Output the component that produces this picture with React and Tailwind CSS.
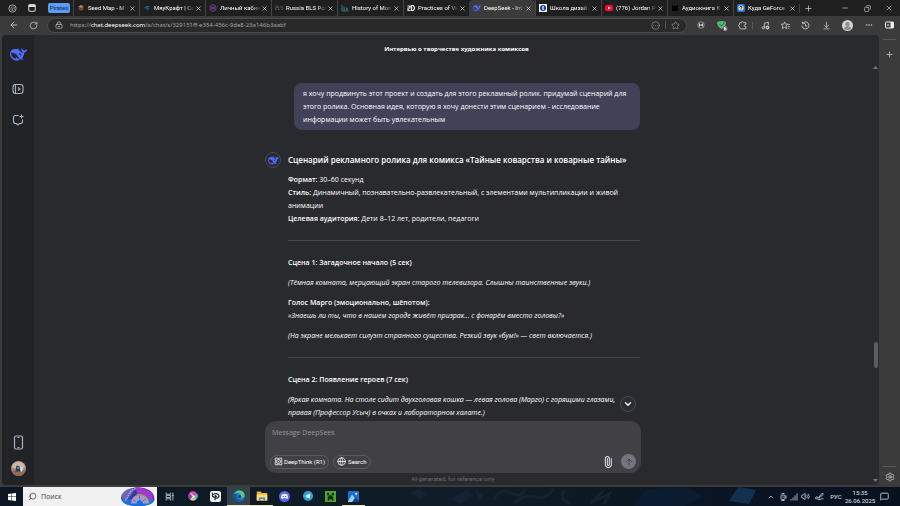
import {
  ArrowDownToLine, ArrowLeft, ArrowUp, ChevronDown, ChevronUp, CircleEllipsis, Copy, Ellipsis, Globe,
  LockKeyhole, MessageSquare, Minus, Paperclip, Plus, RotateCw, Search, Settings, Star, Volume2, X,
} from "lucide-react";

const WHALE =
  "M23.748 4.482c-.254-.124-.364.113-.512.234-.051.039-.094.09-.137.136-.372.397-.806.657-1.373.626-.829-.046-1.537.214-2.163.848-.133-.782-.575-1.248-1.247-1.548-.352-.156-.708-.311-.955-.65-.172-.241-.219-.51-.305-.774-.055-.16-.11-.323-.293-.35-.2-.031-.278.136-.356.276-.313.572-.434 1.202-.422 1.84.027 1.436.633 2.58 1.838 3.393.137.093.172.187.129.323-.082.28-.18.552-.266.833-.055.179-.137.217-.329.14a5.526 5.526 0 01-1.736-1.18c-.857-.828-1.631-1.742-2.597-2.458a11.365 11.365 0 00-.689-.471c-.985-.957.13-1.743.388-1.836.27-.098.093-.432-.779-.428-.872.004-1.67.295-2.687.684a3.055 3.055 0 01-.465.137 9.597 9.597 0 00-2.883-.102c-1.885.21-3.39 1.102-4.497 2.623C.082 8.606-.231 10.684.152 12.85c.403 2.284 1.569 4.175 3.36 5.653 1.858 1.533 3.997 2.284 6.438 2.14 1.482-.085 3.133-.284 4.994-1.86.47.234.962.327 1.78.397.63.059 1.236-.03 1.705-.128.735-.156.684-.837.419-.961-2.155-1.004-1.682-.595-2.113-.926 1.096-1.296 2.746-2.642 3.392-7.003.05-.347.007-.565 0-.845-.004-.17.035-.237.23-.256a4.173 4.173 0 001.545-.475c1.396-.763 1.96-2.015 2.093-3.517.02-.23-.004-.467-.247-.588zM11.581 18c-2.089-1.642-3.102-2.183-3.52-2.16-.392.024-.321.471-.235.763.09.288.207.486.371.739.114.167.192.416-.113.603-.673.416-1.842-.14-1.897-.167-1.361-.802-2.5-1.86-3.301-3.307-.774-1.393-1.224-2.887-1.298-4.482-.02-.386.093-.522.477-.592a4.696 4.696 0 011.529-.039c2.132.312 3.946 1.265 5.468 2.774.868.86 1.525 1.887 2.202 2.891.72 1.066 1.494 2.082 2.48 2.914.348.292.625.514.891.677-.802.09-2.14.11-3.054-.614zm1-6.44a.306.306 0 01.415-.287.302.302 0 01.2.288.306.306 0 01-.31.307.303.303 0 01-.304-.308zm3.11 1.596c-.2.081-.399.151-.59.16a1.245 1.245 0 01-.798-.254c-.274-.23-.47-.358-.552-.758a1.73 1.73 0 01.016-.588c.07-.327-.008-.537-.239-.727-.187-.156-.426-.199-.688-.199a.559.559 0 01-.254-.078c-.11-.054-.2-.19-.114-.358.028-.054.16-.186.192-.21.356-.202.767-.136 1.146.016.352.144.618.408 1.001.782.391.451.462.576.685.914.176.265.336.537.445.848.067.195-.019.354-.25.452z";

function Whale({ className }) {
  return (
    <svg viewBox="0 0 24 24" className={className} fill="#4d6bfe">
      <path d={WHALE} />
    </svg>
  );
}

function Glyph({ children, className = "size-2", box = "0 0 16 16" }) {
  return (
    <svg viewBox={box} className={`shrink-0 ${className}`} fill="none">
      {children}
    </svg>
  );
}

const tabs = [
  {
    title: "Seed Map - M",
    icon: (
      <Glyph>
        <path d="M3 5l5-3 5 3v6l-5 3-5-3z" fill="#5b4a3d" />
        <path d="M3 5l5 3 5-3-5-3z" fill="#a68a6c" />
      </Glyph>
    ),
  },
  { title: "МяуКрафт | Co", icon: <Glyph><path d="M1 8l6-4h8l-5 3 4 1-6 5-1-4z" fill="#1d5587" /></Glyph> },
  {
    title: "Личный кабин",
    icon: (
      <Glyph>
        <path d="M8 1l6 3v8l-6 3-6-3V4zM2 8h12M8 1v14M2 4l12 8M14 4L2 12" stroke="#65498a" strokeWidth="1.4" />
      </Glyph>
    ),
  },
  { title: "Russia BLS Por", icon: <Glyph><path d="M1 4h4v3H1v4h4M7 4v7h3M15 4h-3v3h3v4h-3" stroke="#555" strokeWidth="1.6" /></Glyph> },
  { title: "History of Mon", icon: <Glyph><path d="M2 2v12h13M6 5v7h3M11 12V7l3 5" stroke="#2f7f86" strokeWidth="1.8" /></Glyph> },
  {
    title: "Practices of Vi",
    icon: (
      <Glyph>
        <path d="M1 4h5v4H2v5h5M9 3v10h3q3-2 3-5t-3-5z" stroke="#e5e5e5" strokeWidth="2.4" />
      </Glyph>
    ),
  },
  { title: "DeepSeek - Int", icon: <Whale className="size-2 shrink-0" />, active: true },
  {
    title: "Школа дизай",
    icon: (
      <Glyph>
        <path d="M0 0h16v16H0z" fill="#f4f6fb" />
        <circle cx="8" cy="8" r="6" fill="#1a3e8c" />
        <path d="M8 4v8M6 6h4M6 10h4" stroke="#fff" strokeWidth="1.5" />
      </Glyph>
    ),
  },
  {
    title: "(776) Jordan P",
    icon: (
      <Glyph>
        <rect y="2" width="16" height="12" rx="3" fill="#f5092f" />
        <path d="M6 5l5 3-5 3z" fill="#fff" />
      </Glyph>
    ),
  },
  { title: "Аудиокнига К", icon: <Glyph><path d="M2 1l3 3h6l3-3v13H2z" fill="#000" /></Glyph> },
  {
    title: "Куда GeForce",
    icon: (
      <Glyph>
        <rect width="16" height="16" rx="3" fill="#1676e8" />
        <circle cx="8" cy="8" r="5.5" fill="#f2c899" />
        <path d="M5 7q3-5 5-1 0 2-2 3M8 11v2" stroke="#1252a5" strokeWidth="2" />
      </Glyph>
    ),
  },
];

function Tab({ title, icon, active }) {
  return (
    <div
      className={`flex h-4 min-w-0 flex-1 items-center border-l px-[3px] ${
        active ? "rounded-t border-transparent bg-[#3b3b3b]" : "border-[#444]"
      }`}
    >
      {icon}
      <button className="ml-[3px] min-w-0 flex-1 overflow-hidden whitespace-nowrap text-left text-[6px] leading-3 text-white [mask-image:linear-gradient(to_right,black_75%,transparent)]">
        {title}
      </button>
      <button aria-label={`Close ${title}`} className="flex w-[7px] justify-center">
        <X className="size-[7px] text-white" />
      </button>
    </div>
  );
}

function TabStrip() {
  return (
    <div className="flex h-4 shrink-0 items-center bg-[#1f1f1f] font-[Roboto,sans-serif] text-[#d0d0d0]">
      <div className="flex w-[73px] shrink-0 items-center">
        <button aria-label="Workspaces" className="flex w-6 justify-center">
          <Glyph className="size-[9px]">
            <circle cx="8" cy="8" r="6.5" stroke="#bbb" strokeWidth="1.4" />
            <path d="M5 6l3-2 4 2v4l-4 2-3-2zM5 6l3 2 4-2M8 8v4" stroke="#aaa" strokeWidth="1" />
          </Glyph>
        </button>
        <button aria-label="Tab actions" className="flex w-4 justify-center">
          <Glyph>
            <rect x="1.5" y="1.5" width="13" height="13" rx="2" stroke="#ddd" strokeWidth="2" />
            <path d="M1 1h14v5H1z" fill="#ddd" />
          </Glyph>
        </button>
        <button className="ml-2 w-[22px] rounded-xs bg-[#5b9cf8] text-center text-[6px] leading-[10px] text-[#12294d]">Pirates</button>
      </div>
      <div className="flex min-w-0 flex-1">
        {tabs.map((tab) => (
          <Tab key={tab.title} {...tab} />
        ))}
      </div>
      <div className="flex w-[101px] shrink-0 items-center border-l border-[#444] pl-1">
        <button aria-label="New tab" className="mr-auto"><Plus className="size-[9px]" /></button>
        <button aria-label="Minimize" className="flex w-[22px] justify-center"><Minus className="size-2" /></button>
        <button aria-label="Restore" className="flex w-[22px] justify-center"><Copy className="size-[7px] -scale-x-100" /></button>
        <button aria-label="Close" className="flex w-[22px] justify-center"><X className="size-2" /></button>
      </div>
    </div>
  );
}

function Toolbar() {
  return (
    <div className="flex h-[18px] shrink-0 items-center bg-[#3b3b3b] text-[#c9c9c9]">
      <button aria-label="Back" className="ml-2 flex w-[11px] justify-center"><ArrowLeft className="size-[10px]" /></button>
      <button aria-label="Reload" className="ml-[9px] mr-2 flex w-[11px] justify-center"><RotateCw className="size-[9px]" /></button>
      <div className="flex h-[15px] min-w-0 flex-1 items-center rounded-full border border-[#4c4c4c] bg-[#292929] pl-[7px] pr-[6px]">
        <LockKeyhole className="size-2" />
        <a
          href="https://chat.deepseek.com/a/chat/s/329151ff-e354-456c-9de8-23a146b3aabf"
          className="ml-[7px] truncate font-['Noto_Sans',sans-serif] text-[6px] leading-3 text-[#a3a3a3]"
        >
          https://<span className="text-white">chat.deepseek.com</span>/a/chat/s/329151ff-e354-456c-9de8-23a146b3aabf
        </a>
        <div className="ml-auto flex items-center text-[#8d8d8d]">
          <CircleEllipsis className="size-[9px]" />
          <span className="mx-[5px] h-2 w-px bg-[#505050]" />
          <Star className="size-[9px]" />
        </div>
      </div>
      <div className="flex w-[213px] shrink-0 items-center pl-1">
        <button aria-label="Extension" className="flex w-5 justify-center">
          <Glyph>
            <circle cx="8" cy="8" r="6.5" stroke="#aaa" strokeWidth="1.5" />
            <path d="M5 5v6M11 5v6M5 8h6" stroke="#ddd" strokeWidth="2" />
          </Glyph>
        </button>
        <button aria-label="Adguard" className="flex w-[21px] justify-center">
          <Glyph className="h-[11px] w-3" box="0 0 24 22">
            <path d="M2 4q9-4 18 0 0 9-9 14Q2 13 2 4z" fill="#56b879" />
            <path d="M7 8l4 4 6-7" stroke="#24653c" strokeWidth="2" />
            <rect x="14" y="12" width="9" height="10" rx="2" fill="#666" />
            <path d="M20 14h-3v6h3v-3h-3" stroke="#fff" strokeWidth="1.4" />
          </Glyph>
        </button>
        <button aria-label="Extensions" className="flex w-5 justify-center">
          <Glyph className="size-[9px]">
            <path
              d="M3 3h3q0-2 2-2t2 2h4v3q-3 0-3 2t3 2v4H5q-2 0-2-2v-2q-2 0-2-2t2-2z"
              stroke="#c9c9c9"
              strokeWidth="1.5"
              strokeLinejoin="round"
            />
          </Glyph>
        </button>
        <span className="h-[7px] w-px bg-[#5a5a5a]" />
        <button aria-label="Media" className="flex w-6 justify-center">
          <Glyph className="size-[9px]">
            <path d="M6 12V4l7-2v5" stroke="#c9c9c9" strokeWidth="1.6" />
            <circle cx="4" cy="12" r="2" stroke="#c9c9c9" strokeWidth="1.5" />
            <circle cx="11.5" cy="11.5" r="3.5" fill="#c9c9c9" />
            <path d="M10.5 10v3l2.5-1.5z" fill="#3b3b3b" />
          </Glyph>
        </button>
        <button aria-label="Favorites" className="flex w-4 justify-center">
          <Glyph className="size-[9px]" box="0 0 20 20">
            <path d="M8 2l2 5h5l-4 4 2 6-5-3-5 3 1-6-4-4h6zM16 8h4M15 12h4M16 16h3" stroke="#c9c9c9" strokeWidth="1.8" />
          </Glyph>
        </button>
        <button aria-label="History" className="flex w-6 justify-center">
          <Glyph className="size-[9px]">
            <path d="M4 3q5-4 9 1 3 5-1 9-5 3-9-1-1-2-1-4M2 1l1 4 4-1M8 5v4h3" stroke="#c9c9c9" strokeWidth="1.6" />
          </Glyph>
        </button>
        <button aria-label="Downloads" className="flex w-[18px] justify-center"><ArrowDownToLine className="size-[9px]" /></button>
        <button aria-label="Profile" className="flex w-6 justify-center">
          <Glyph className="size-[11px]">
            <circle cx="8" cy="8" r="8" fill="#d5d1cd" />
            <circle cx="8" cy="6" r="3" fill="#918b86" />
            <path d="M3 13q0-4 5-4t5 4q-5 3-10 0z" fill="#918b86" />
          </Glyph>
        </button>
        <button aria-label="Menu" className="flex w-5 justify-center"><Ellipsis className="size-2" /></button>
        <button aria-label="Sidebar" className="flex w-5 justify-center">
          <Glyph className="h-2 w-[9px]" box="0 0 18 16">
            <rect x="1" y="2" width="16" height="12" rx="2" stroke="#eee" strokeWidth="2" />
            <path d="M11 2h6v12h-6z" fill="#eee" />
            <path d="M4 8h4" stroke="#eee" strokeWidth="2" />
          </Glyph>
        </button>
      </div>
    </div>
  );
}

function ChatSidebar() {
  return (
    <nav className="flex w-8 shrink-0 flex-col items-center bg-[#212327] pb-[9px] pt-[11px]">
      <a href="#home" aria-label="DeepSeek"><Whale className="size-[17px]" /></a>
      <button aria-label="Open sidebar" className="mt-5">
        <Glyph className="size-3" box="0 0 24 24">
          <rect x="2" y="3" width="20" height="18" rx="5" stroke="#a8b3c2" strokeWidth="2.2" />
          <path d="M7 4v16M12 9l4 3-4 3" stroke="#a8b3c2" strokeWidth="2.2" />
        </Glyph>
      </button>
      <button aria-label="New chat" className="mt-[19px]">
        <Glyph className="size-3" box="0 0 24 24">
          <path d="M13 3H7Q3 3 3 7v8q0 4 4 4h2l3 3 3-3h2q4 0 4-4v-4M19 1v8M15 5h8" stroke="#a8b3c2" strokeWidth="2.2" />
        </Glyph>
      </button>
      <button aria-label="Get app" className="mt-auto">
        <Glyph className="h-[15px] w-[11px]" box="0 0 22 30">
          <rect x="3" y="2" width="16" height="26" rx="3" stroke="#a8b3c2" strokeWidth="2.4" />
          <path d="M9 5h4M9 25h4" stroke="#a8b3c2" strokeWidth="2" />
        </Glyph>
      </button>
      <button aria-label="Account" className="mt-[11px]">
        <Glyph className="size-[15px]" box="0 0 30 30">
          <circle cx="15" cy="15" r="15" fill="#a58b79" />
          <path d="M3 7q12-12 24 0v7H2z" fill="#c8b8a8" />
          <path d="M2 19h26q-4 11-13 11T2 19z" fill="#8b6b58" />
          <path d="M11 9l6 2 2 10H9z" fill="#303b50" />
          <path d="M12 12h5v4h-5z" fill="#4c82c4" />
          <path d="M19 12l5 2-2 7h-3z" fill="#eee5d8" />
        </Glyph>
      </button>
    </nav>
  );
}

function Conversation() {
  return (
    <div className="relative min-h-0 w-full max-w-[376px] flex-1 text-[7px] leading-[13px] text-white">
      <div className="h-full overflow-hidden pr-px pt-5">
        <div className="flex justify-end">
          <p className="w-[346px] rounded-lg bg-[#414158] px-[9px] py-1">
            я хочу продвинуть этот проект и создать для этого рекламный ролик. придумай сценарий для этого ролика. Основная
            идея, которую я хочу донести этим сценарием - исследование информации может быть увлекательным
          </p>
        </div>
        <div className="mt-[22px] flex items-start gap-[7px]">
          <div className="flex size-4 shrink-0 items-center justify-center rounded-full border border-[#454b5c]">
            <Whale className="size-[11px]" />
          </div>
          <article className="min-w-0 flex-1">
            <h2 className="whitespace-nowrap text-[8px] font-semibold leading-4">
              Сценарий рекламного ролика для комикса «Тайные коварства и коварные тайны»
            </h2>
            <p className="mt-[5px]">
              <b className="font-semibold">Формат:</b> 30–60 секунд
              <br />
              <b className="font-semibold">Стиль:</b> Динамичный, познавательно-развлекательный, с элементами мультипликации и живой анимации
              <br />
              <b className="font-semibold">Целевая аудитория:</b> Дети 8–12 лет, родители, педагоги
            </p>
            <hr className="my-[15px] border-[#48494d]" />
            <div className="flex flex-col gap-[7px]">
              <h3 className="font-semibold">Сцена 1: Загадочное начало (5 сек)</h3>
              <p className="font-medium italic">
                (Тёмная комната, мерцающий экран старого телевизора. Слышны таинственные звуки.)
              </p>
              <p>
                <b className="font-semibold">Голос Марго (эмоционально, шёпотом):</b>
                <br />
                <i className="font-medium">
                  «Знаешь ли ты, что в нашем городе живёт призрак... с фонарём вместо головы?»
                </i>
              </p>
              <p className="font-medium italic">
                (На экране мелькает силуэт странного существа. Резкий звук «бум!» — свет включается.)
              </p>
            </div>
            <hr className="my-[15px] border-[#48494d]" />
            <div className="flex flex-col gap-[7px]">
              <h3 className="font-semibold">Сцена 2: Появление героев (7 сек)</h3>
              <p className="font-medium italic">
                (Яркая комната. На столе сидит двухголовая кошка — левая голова (Марго) с горящими глазами,
                <br />
                правая (Профессор Усыч) в очках и лабораторном халате.)
              </p>
            </div>
          </article>
        </div>
      </div>
      <button
        aria-label="Scroll to bottom"
        className="absolute bottom-[9px] right-[5px] flex size-4 items-center justify-center rounded-full border border-[#4a4b54] bg-[#2c2d34]"
      >
        <ChevronDown className="size-[10px] text-white" strokeWidth={3} />
      </button>
    </div>
  );
}

function Composer() {
  return (
    <form className="flex w-full max-w-[376px] shrink-0 flex-col rounded-[11px] bg-[#404045] px-[5px] pb-1 pt-[5px]">
      <textarea
        aria-label="Message DeepSeek"
        placeholder="Message DeepSeek"
        className="h-7 resize-none bg-transparent px-[2px] text-[7px] leading-[13px] text-white outline-none placeholder:text-[#96979e]"
      />
      <div className="flex h-[15px] items-center gap-1 font-[Roboto,sans-serif] text-[6px] leading-3 text-white">
        <button type="button" className="flex items-center gap-px rounded-full border border-[#5b5b61] px-[3px]">
          <Glyph className="size-[9px]" box="0 0 18 18">
            <ellipse cx="9" cy="9" rx="9" ry="4" transform="rotate(45 9 9)" stroke="#fff" strokeWidth="1.6" />
            <ellipse cx="9" cy="9" rx="9" ry="4" transform="rotate(-45 9 9)" stroke="#fff" strokeWidth="1.6" />
            <circle cx="9" cy="9" r="1.5" fill="#fff" />
          </Glyph>
          DeepThink (R1)
        </button>
        <button type="button" className="flex items-center gap-[2px] rounded-full border border-[#5b5b61] px-[3px]">
          <Globe className="size-[9px]" />
          Search
        </button>
        <button type="button" aria-label="Attach" className="ml-auto mr-[3px]">
          <Paperclip className="size-3 -rotate-45 text-[#dfe1e8]" />
        </button>
        <button type="button" aria-label="Send" className="flex size-[15px] items-center justify-center rounded-full bg-[#73747e]">
          <ArrowUp className="size-[10px] text-[#404045]" />
        </button>
      </div>
    </form>
  );
}

function ScrollTrack() {
  return (
    <div className="flex w-[7px] shrink-0 flex-col items-center py-[3px]">
      <Glyph className="h-[3px] w-[5px]" box="0 0 10 6"><path d="M0 6l5-6 5 6z" fill="#77787b" /></Glyph>
      <div className="grow-[272]" />
      <div className="h-[26px] w-1 rounded-full bg-[#5c5d60]" />
      <div className="grow-[111]" />
      <Glyph className="h-[3px] w-[5px]" box="0 0 10 6"><path d="M0 0l5 6 5-6z" fill="#77787b" /></Glyph>
    </div>
  );
}

function EdgeRail() {
  return (
    <aside className="flex w-[21px] shrink-0 flex-col items-center pb-[3px] pt-1 text-[#c9c9c9]">
      <span className="h-px w-[13px] bg-[#5a5a5a]" />
      <button aria-label="Add" className="mt-[10px]"><Plus className="size-[9px]" /></button>
      <span className="mt-auto h-px w-[13px] bg-[#5a5a5a]" />
      <button aria-label="Settings" className="mt-[5px]"><Settings className="size-[10px]" /></button>
    </aside>
  );
}

const apps = [
  {
    name: "Task view",
    icon: <Glyph className="size-[9px]"><path d="M2 1v3h8V1M2 15v-3h8v3M2 6h8v4H2zM14 1v14M12.5 6h3" stroke="#ccd2d8" strokeWidth="1.5" /></Glyph>,
  },
  {
    name: "Krita",
    icon: (
      <Glyph className="size-[10px]">
        <circle cx="8" cy="8" r="7.5" fill="#e546a5" />
        <path d="M8 8L15 5a7.5 7.5 0 01-3 9z" fill="#38c5ec" />
        <path d="M8 8l4 6a7.5 7.5 0 01-9-1z" fill="#f3cf44" />
        <path d="M8 8l-5 5a7.5 7.5 0 01-2-7z" fill="#6550d8" />
        <path d="M3 2l8 7-2 2z" fill="#fff" />
      </Glyph>
    ),
  },
  {
    name: "Clip Studio",
    icon: (
      <Glyph className="size-[11px]">
        <rect width="16" height="16" rx="3" fill="#eee" />
        <path d="M7 13l1-3q5 1 5-3-1-4-6-3-5 1-3 4 2 2 5 0l-2-2M4 4l-1-1" stroke="#222" strokeWidth="1.8" />
      </Glyph>
    ),
  },
  {
    name: "Edge",
    focused: true,
    open: true,
    icon: (
      <Glyph className="size-3">
        <circle cx="8" cy="8" r="7.5" fill="#1684cf" />
        <path d="M1 6Q4 0 9 .6q6 1 6.5 6.4 0 4-5 3.5Q12 5 7 4 3 3.5 1 6z" fill="#4fce83" />
        <path d="M.5 8Q2 4 6 5 3 8 6 12q3 3 7 1-3 3-7 2Q1 13 .5 8z" fill="#1450a2" />
        <circle cx="9" cy="8.5" r="2" fill="#17334a" />
      </Glyph>
    ),
  },
  {
    name: "Explorer",
    open: true,
    icon: (
      <Glyph className="size-3">
        <path d="M1 2h5l2 2h7v10H1z" fill="#e9b33d" />
        <path d="M1 6h14v8H1z" fill="#ffdd78" />
        <path d="M4 10h8v4h-2v-2H6v2H4z" fill="#3b8bd8" />
      </Glyph>
    ),
  },
  {
    name: "Discord",
    icon: (
      <Glyph className="size-[11px]">
        <circle cx="8" cy="8" r="8" fill="#5865f2" />
        <path d="M4 5q4-2 8 0 1 3 1 5-2 2-3 1l-1-1H7l-1 1q-1 1-3-1 0-2 1-5z" fill="#fff" />
        <circle cx="6.3" cy="8" r="1" fill="#5865f2" />
        <circle cx="9.7" cy="8" r="1" fill="#5865f2" />
      </Glyph>
    ),
  },
  {
    name: "Telegram",
    icon: (
      <Glyph className="size-[10px]">
        <circle cx="8" cy="8" r="8" fill="#2aa1dc" />
        <path d="M3 8l9-4-1.5 8-3-2-1.5 2V9l4-3-5 3z" fill="#fff" />
      </Glyph>
    ),
  },
  {
    name: "Minecraft",
    icon: (
      <Glyph className="size-[11px]">
        <path d="M0 0h16v16H0z" fill="#4ea52e" />
        <path d="M3 3h3v3H3zM10 3h3v3h-3zM6 6h4v2h2v6h-2v-2H6v2H4V8h2z" fill="#10240b" />
      </Glyph>
    ),
  },
  {
    name: "Photos",
    open: true,
    icon: (
      <Glyph className="size-[11px]">
        <rect width="16" height="16" rx="1" fill="#1c6fcb" />
        <path d="M0 15L6 5l8 11H0z" fill="#8fd3f8" />
        <path d="M6 16l5-7 5 6v1z" fill="#153f86" />
        <circle cx="12" cy="4" r="1.5" fill="#fff" />
      </Glyph>
    ),
  },
];

function Taskbar() {
  return (
    <footer className="flex h-[19px] shrink-0 items-stretch bg-linear-to-r from-[#0b1722] via-[#101c28] to-[#07101f] text-[#e6e9ec]">
      <button aria-label="Start" className="flex w-[23px] items-center justify-center">
        <Glyph><path d="M0 2l7-1v6H0zM8 1l8-1v7H8zM0 8h7v7l-7-1zM8 8h8v8l-8-1z" fill="#fff" /></Glyph>
      </button>
      <label className="flex w-[134px] items-center bg-[#f1f1f1] pl-[5px] text-[#3b3b3b]">
        <Search className="size-[9px] shrink-0 -scale-x-100" />
        <input aria-label="Поиск" placeholder="Поиск" className="ml-1 min-w-0 flex-1 bg-transparent text-[7px] leading-3 outline-none placeholder:text-[#3b3b3b]" />
        <Glyph className="mr-[2px] h-[19px] w-[34px]" box="0 0 68 38">
          <path d="M0 22Q2 8 20 3q20-6 36 3 10 6 11 18-2 14-33 14T0 22z" fill="#343aa0" />
          <path d="M28 1q22-1 34 12l3 13H38z" fill="#a636cf" />
          <path d="M2 14Q14 0 29 4L10 29Q-2 24 2 14z" fill="#6d66b7" />
          <path d="M1 26q32-4 66 0-6 12-33 12T1 26z" fill="#1572df" />
          <path d="M20 33q1-17 16-17 18 0 20 17H44q-1-7-7-7-6 1-6 7z" fill="#a79ac9" />
          <path d="M31 15q20-2 25 14" stroke="#75b83d" strokeWidth="2" />
          <path d="M9 27L21 6l9-3" stroke="#b8a3df" strokeWidth="3" strokeDasharray="3 2" />
          <path d="M24 26l6 3M37 17v7M50 24l-6 4" stroke="#655b91" strokeWidth="1.5" />
        </Glyph>
      </label>
      <div className="flex pl-px">
        {apps.map(({ name, icon, open, focused }) => (
          <button
            key={name}
            aria-label={name}
            className={`flex w-[23px] items-center justify-center border-b ${open ? "border-[#f0e3b0]" : "border-transparent"} ${
              focused ? "bg-[#34424d]" : ""
            }`}
          >
            {icon}
          </button>
        ))}
      </div>
      <svg viewBox="0 0 400 19" preserveAspectRatio="none" className="h-full min-w-0 flex-1">
        <path d="M45 6l9-4 7 5-6 6zM85 12l16-9 7 6-12 8zM110 3l9 4-5 7z" fill="#132334" />
        <path d="M128 13q8-13 18-7t14-4M150 16q9-9 20-6t18-8M200 3q-7 9 5 14M238 4l-12 12 18-9-5 10" stroke="#16222e" strokeWidth="3" fill="none" />
        <path d="M268 19l14-17 40-2 16 10-19 9z" fill="#0b1c30" />
        <path d="M364 14l9-14 18 3-7 14z" fill="#12304f" />
      </svg>
      <div className="flex items-center font-[Roboto,sans-serif]">
        <button aria-label="Tray" className="flex w-3 justify-center"><ChevronUp className="size-2" /></button>
        <button aria-label="Camera" className="flex w-[11px] justify-center">
          <Glyph><rect x="4" y="4" width="8" height="9" rx="2" stroke="#ddd" strokeWidth="1.6" /><path d="M5 1h6M5 15h6M14 5v6M8 7v3" stroke="#ddd" strokeWidth="1.6" /></Glyph>
        </button>
        <button aria-label="Network" className="flex w-3 justify-center">
          <Glyph><path d="M2 15v-3M6 15V9M10 15V5M14 15V1" stroke="#aab0b6" strokeWidth="2" /></Glyph>
        </button>
        <button aria-label="Volume" className="flex w-[11px] justify-center"><Volume2 className="size-[9px]" /></button>
        <button aria-label="Pen" className="flex w-4 justify-center">
          <Glyph className="size-[9px]">
            <path d="M6 10l7-8 2 2-8 7zM6 10q-4-3-5 0t3 2q3 3 6 1t5-1" stroke="#ddd" strokeWidth="1.5" />
          </Glyph>
        </button>
        <button className="w-[18px] text-center text-[6px] leading-3">РУС</button>
        <button className="w-[30px] whitespace-nowrap text-center text-[6px] leading-2">
          15:35
          <br />
          26.06.2025
        </button>
        <button aria-label="Notifications" className="flex w-[18px] justify-center"><MessageSquare className="size-[9px]" /></button>
        <span className="w-[7px]" />
      </div>
    </footer>
  );
}

export default function App() {
  return (
    <div className="flex h-screen flex-col overflow-hidden bg-[#3b3b3b] font-['Open_Sans','Noto_Sans',sans-serif]">
      <TabStrip />
      <Toolbar />
      <div className="flex min-h-0 flex-1 pb-[2px] pl-[2px] pt-px">
        <div className="flex min-w-0 flex-1 overflow-hidden rounded bg-[#292a2d]">
          <ChatSidebar />
          <main className="flex min-w-0 flex-1 flex-col">
            <h1 className="h-7 shrink-0 text-center text-[6px] font-bold leading-7 text-white">
              Интервью о творчестве художника комиксов
            </h1>
            <div className="flex min-h-0 flex-1">
              <div className="flex min-w-0 flex-1 flex-col items-center">
                <Conversation />
                <Composer />
                <p className="shrink-0 font-[Roboto,sans-serif] text-[6px] leading-3 text-[#6b6c70]">AI-generated, for reference only</p>
              </div>
              <ScrollTrack />
            </div>
          </main>
        </div>
        <EdgeRail />
      </div>
      <Taskbar />
    </div>
  );
}
